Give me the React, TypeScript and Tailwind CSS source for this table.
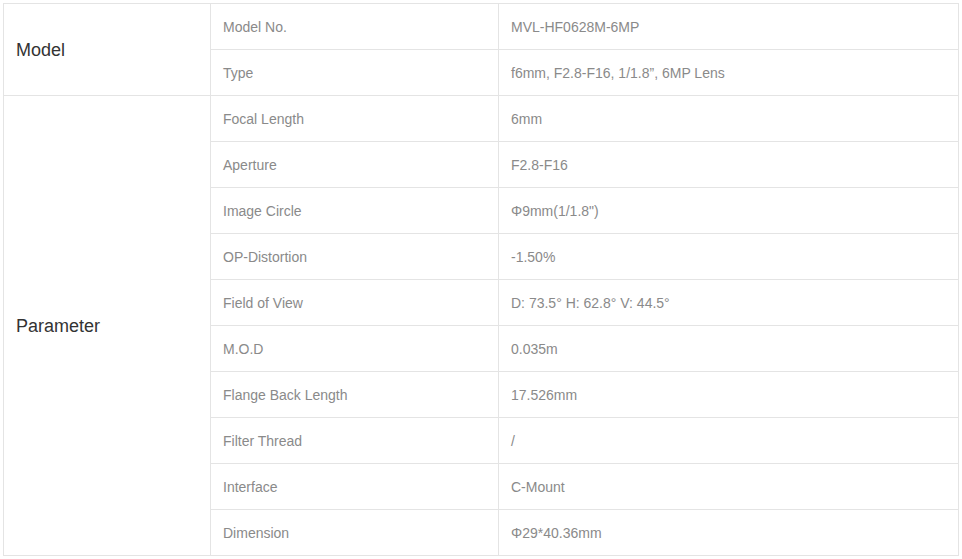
import React from "react";

const rows: [string, string][] = [
  ["Focal Length", "6mm"],
  ["Aperture", "F2.8-F16"],
  ["Image Circle", "Φ9mm(1/1.8\")"],
  ["OP-Distortion", "-1.50%"],
  ["Field of View", "D: 73.5° H: 62.8° V: 44.5°"],
  ["M.O.D", "0.035m"],
  ["Flange Back Length", "17.526mm"],
  ["Filter Thread", "/"],
  ["Interface", "C-Mount"],
  ["Dimension", "Φ29*40.36mm"],
];

const cell = "border border-[#e4e4e4] px-[12px] pt-[2px] h-[46px] text-[14px] text-[#8a8a8a] align-middle";
const head = "border border-[#e4e4e4] pl-[12px] pt-[2px] text-[18px] text-[#333] align-middle";

export default function App() {
  return (
    <div className="bg-white min-h-[559px] pt-[3px] pl-[3px]" style={{ fontFamily: '"Liberation Sans", Arial, sans-serif' }}>
      <table className="border-collapse w-[956px] table-fixed">
        <colgroup>
          <col className="w-[207px]" />
          <col className="w-[288px]" />
          <col />
        </colgroup>
        <tbody>
          <tr>
            <td rowSpan={2} className={head}>Model</td>
            <td className={cell}>Model No.</td>
            <td className={cell}>MVL-HF0628M-6MP</td>
          </tr>
          <tr>
            <td className={cell}>Type</td>
            <td className={cell}>f6mm, F2.8-F16, 1/1.8”, 6MP Lens</td>
          </tr>
          {rows.map(([k, v], i) => (
            <tr key={k}>
              {i === 0 && (
                <td rowSpan={rows.length} className={head}>Parameter</td>
              )}
              <td className={cell}>{k}</td>
              <td className={cell}>{v}</td>
            </tr>
          ))}
        </tbody>
      </table>
    </div>
  );
}
